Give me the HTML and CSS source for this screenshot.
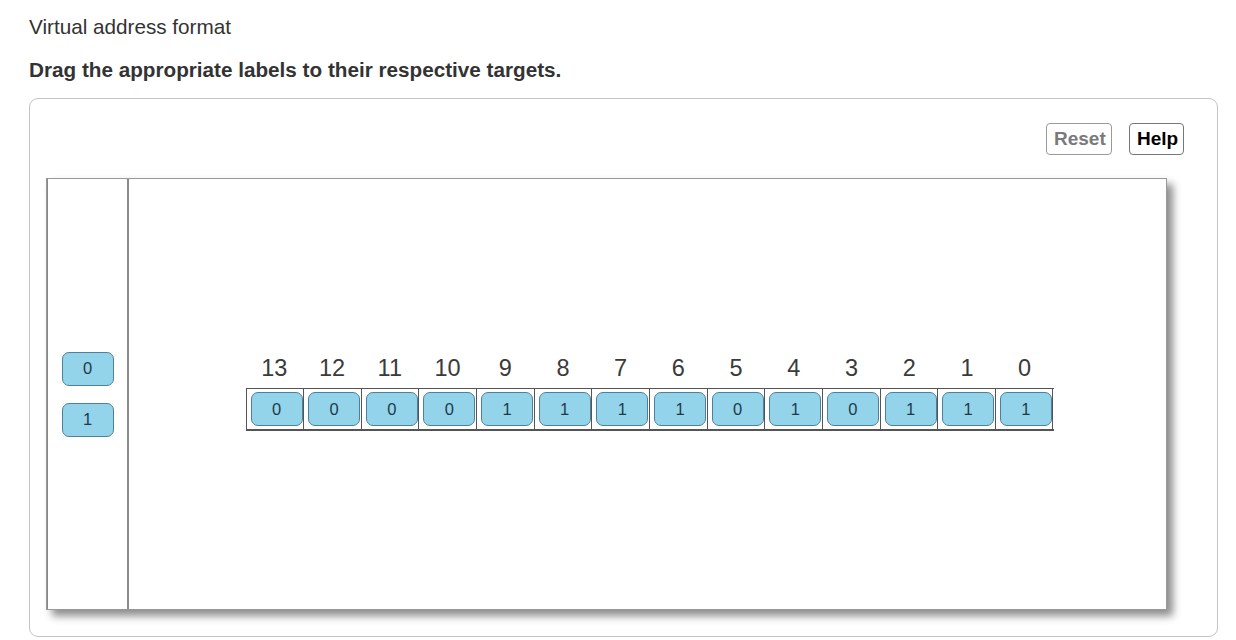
FILE: index.html
```html
<!DOCTYPE html>
<html lang="en">
<head>
<meta charset="utf-8">
<title>Virtual address format</title>
<link rel="stylesheet" href="styles.css">
</head>
<body>
<div class="page">
  <h1 class="title">Virtual address format</h1>
  <p class="instr">Drag the appropriate labels to their respective targets.</p>
  <div class="panel">
    <div class="toolbar">
      <button class="btn btn-reset">Reset</button>
      <button class="btn btn-help">Help</button>
    </div>
    <div class="canvas">
      <div class="bank">
        <div class="chip">0</div>
        <div class="chip">1</div>
      </div>
      <div class="board">
        <div class="addr">
          <div class="nums">
            <span>13</span><span>12</span><span>11</span><span>10</span><span>9</span><span>8</span><span>7</span><span>6</span><span>5</span><span>4</span><span>3</span><span>2</span><span>1</span><span>0</span>
          </div>
          <div class="cells">
            <div class="cell"><div class="chip">0</div></div>
            <div class="cell"><div class="chip">0</div></div>
            <div class="cell"><div class="chip">0</div></div>
            <div class="cell"><div class="chip">0</div></div>
            <div class="cell"><div class="chip">1</div></div>
            <div class="cell"><div class="chip">1</div></div>
            <div class="cell"><div class="chip">1</div></div>
            <div class="cell"><div class="chip">1</div></div>
            <div class="cell"><div class="chip">0</div></div>
            <div class="cell"><div class="chip">1</div></div>
            <div class="cell"><div class="chip">0</div></div>
            <div class="cell"><div class="chip">1</div></div>
            <div class="cell"><div class="chip">1</div></div>
            <div class="cell"><div class="chip">1</div></div>
          </div>
        </div>
      </div>
    </div>
  </div>
</div>
</body>
</html>
```

FILE: styles.css
```css
* { box-sizing: border-box; }
html, body { margin: 0; padding: 0; background: #fff; }
body {
  font-family: "Liberation Sans", Arial, Helvetica, sans-serif;
  color: #333;
}
.page {
  padding: 0 19px 0 29px;
}
.title {
  margin: 0;
  padding-top: 14px;
  font-size: 20.7px;
  font-weight: normal;
  line-height: 26px;
  color: #333;
}
.instr {
  margin: 17px 0 0 0;
  font-size: 20.7px;
  font-weight: bold;
  line-height: 26px;
  color: #333;
}
.panel {
  margin-top: 15px;
  width: 1189px;
  height: 539px;
  border: 1px solid #c4c4c4;
  border-radius: 9px;
  padding: 24px 33px 25px 16px;
}
.toolbar {
  display: flex;
  justify-content: flex-end;
  gap: 17px;
  height: 32px;
}
.btn {
  font-family: "Liberation Sans", Arial, Helvetica, sans-serif;
  font-size: 19px;
  font-weight: bold;
  background: #fff;
  border: 1px solid #9a9a9a;
  border-radius: 4px;
  height: 32px;
  padding: 0 7px;
  line-height: 30px;
}
.btn-reset { color: #7a7a7a; width: 66px; }
.btn-help { color: #000; width: 55px; border-color: #777; }
.canvas {
  margin-top: 23px;
  width: 1121px;
  height: 432px;
  border: 1px solid #999;
  background: #fff;
  box-shadow: 6px 6px 8px rgba(0, 0, 0, 0.45);
  display: flex;
}
.bank {
  width: 82px;
  flex: none;
  border-right: 2px solid #8a8a8a;
  border-left: 1px solid #888;
  display: flex;
  flex-direction: column;
  align-items: center;
  justify-content: center;
  gap: 17px;
}
.chip {
  width: 52px;
  height: 34px;
  background: #93d4ea;
  border: 1px solid #4f8099;
  border-radius: 7px;
  display: flex;
  align-items: center;
  justify-content: center;
  font-size: 16.5px;
  color: #1f3b4a;
}
.board {
  flex: 1;
  display: flex;
  align-items: center;
  justify-content: center;
  padding-left: 4px;
  padding-bottom: 2px;
}
.addr {
  width: 808px;
}
.nums {
  display: grid;
  grid-template-columns: repeat(14, 1fr);
  font-size: 23.5px;
  line-height: 26px;
  color: #3a3a3a;
  text-align: center;
  margin-bottom: 7px;
}
.cells {
  display: grid;
  grid-template-columns: repeat(14, 1fr);
  border-top: 1px solid #555;
  border-bottom: 2px solid #555;
  border-left: 1px solid #555;
  height: 43px;
}
.cell {
  border-right: 1px solid #555;
  display: flex;
  align-items: center;
  padding-left: 4px;
}
.cell .chip {
  width: 52px;
}
```
